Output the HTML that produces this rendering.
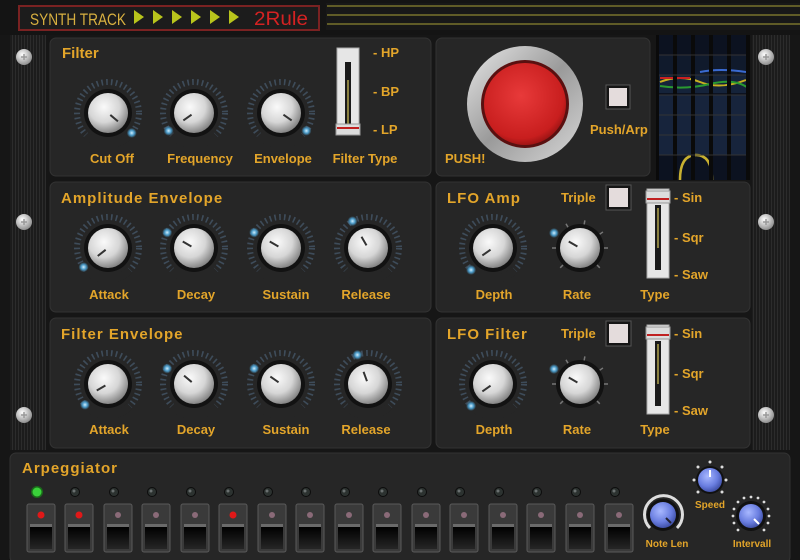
<!DOCTYPE html>
<html><head><meta charset="utf-8"><style>
html,body{margin:0;padding:0;background:#161616;}
svg{display:block}
text{font-family:"Liberation Sans",sans-serif;font-weight:bold;fill:#e3a52a;}
</style></head><body>
<svg width="800" height="560" viewBox="0 0 800 560" xmlns="http://www.w3.org/2000/svg">
<defs>
<radialGradient id="kg" cx="0.4" cy="0.35" r="0.7">
<stop offset="0" stop-color="#fafafa"/><stop offset="0.55" stop-color="#d6d6d6"/><stop offset="1" stop-color="#7a7a7a"/></radialGradient>
<radialGradient id="bg" cx="0.4" cy="0.35" r="0.7">
<stop offset="0" stop-color="#a8b8ff"/><stop offset="0.6" stop-color="#6a7ee0"/><stop offset="1" stop-color="#3a4aa0"/></radialGradient>
<radialGradient id="red" cx="0.45" cy="0.4" r="0.65">
<stop offset="0" stop-color="#e83a3a"/><stop offset="0.8" stop-color="#c81e1e"/><stop offset="1" stop-color="#8a1010"/></radialGradient>
<linearGradient id="ring" x1="0" y1="0" x2="1" y2="1">
<stop offset="0" stop-color="#e8e8e8"/><stop offset="0.5" stop-color="#9a9a9a"/><stop offset="1" stop-color="#d8d8d8"/></linearGradient>
<linearGradient id="key" x1="0" y1="0" x2="0" y2="1">
<stop offset="0" stop-color="#000"/><stop offset="1" stop-color="#262626"/></linearGradient>
<radialGradient id="glow"><stop offset="0" stop-color="#cfefff"/><stop offset="0.5" stop-color="#4a9ac8"/><stop offset="1" stop-color="#4a9ac8" stop-opacity="0"/></radialGradient>
<radialGradient id="screw" cx="0.4" cy="0.35" r="0.7"><stop offset="0" stop-color="#fff"/><stop offset="1" stop-color="#888"/></radialGradient>
<pattern id="stripes" width="3" height="10" patternUnits="userSpaceOnUse"><rect width="3" height="10" fill="#1c1c1c"/><rect width="1" height="10" fill="#2c2c2c"/></pattern>
<g id="ticks">
<circle r="31" fill="none" stroke="#3e4c5a" stroke-width="6" stroke-dasharray="1.6 3.2"/>
<circle r="31" fill="none" stroke="#262626" stroke-width="8" stroke-dasharray="0 24.35 48.7 122"/>
</g>
<g id="body">
<circle r="24" fill="#121212"/>
<circle r="20" fill="url(#kg)"/>
</g>
<g id="step">
<rect x="0" y="0" width="28" height="48" rx="2" fill="#3a3a3a" stroke="#5a5a5a"/>
<rect x="3" y="20" width="22" height="3" fill="#6a6a6a"/>
<rect x="3" y="23" width="22" height="22" fill="url(#key)"/>
</g>
<g id="led"><circle r="5" fill="#0c0c0c"/><circle r="4" fill="#2c3230"/><circle cx="-1" cy="-1" r="1.5" fill="#6a7070"/></g>
<g id="scr"><circle r="8" fill="url(#screw)"/><path d="M-3 0H3M0 -3V3" stroke="#999" stroke-width="1.5"/></g>
</defs>

<rect x="0" y="0" width="800" height="35" fill="#141414"/>
<rect x="19" y="6" width="300" height="24" fill="#1c1c1c" stroke="#7a2222" stroke-width="2"/>
<text x="30" y="25" font-size="17" textLength="96" lengthAdjust="spacingAndGlyphs" style="font-weight:normal;fill:#d8b040">SYNTH TRACK</text>
<g fill="#b8c41c">
<path d="M134 10l10 7-10 7z"/><path d="M153 10l10 7-10 7z"/><path d="M172 10l10 7-10 7z"/><path d="M191 10l10 7-10 7z"/><path d="M210 10l10 7-10 7z"/><path d="M229 10l10 7-10 7z"/>
</g>
<text x="254" y="25" font-size="19" textLength="54" lengthAdjust="spacingAndGlyphs" style="fill:#d42222;font-weight:normal">2Rule</text>
<rect x="326" y="3" width="474" height="27" fill="#181818"/>
<g stroke="#8a8430" stroke-width="1.2"><path d="M327 6H800M327 15H800M327 24H800"/></g>

<rect x="10" y="35" width="36" height="415" fill="url(#stripes)"/>
<rect x="752" y="35" width="38" height="415" fill="url(#stripes)"/>
<use href="#scr" x="24" y="57"/><use href="#scr" x="24" y="222"/><use href="#scr" x="24" y="415"/>
<use href="#scr" x="766" y="57"/><use href="#scr" x="766" y="222"/><use href="#scr" x="766" y="415"/>

<g fill="#262626" stroke="#333" stroke-width="1">
<rect x="50" y="38" width="381" height="138" rx="6"/>
<rect x="436" y="38" width="214" height="138" rx="6"/>
<rect x="50" y="182" width="381" height="130" rx="6"/>
<rect x="436" y="182" width="314" height="130" rx="6"/>
<rect x="50" y="318" width="381" height="130" rx="6"/>
<rect x="436" y="318" width="314" height="130" rx="6"/>
<rect x="10" y="453" width="780" height="110" rx="6"/>
</g>

<rect x="656" y="35" width="94" height="145" fill="#0c1220"/>
<rect x="658" y="55" width="90" height="20" fill="#101a2c"/>
<rect x="658" y="75" width="90" height="18" fill="#15233a"/>
<path d="M660 82q20-8 40 0t46-2" stroke="#c8b020" stroke-width="2" fill="none"/>
<path d="M660 86q25 4 50-2t38 4" stroke="#2a9a30" stroke-width="2" fill="none"/>
<path d="M700 72q20-4 46 0" stroke="#3a6ad0" stroke-width="2" fill="none"/>
<path d="M660 78h30" stroke="#c82020" stroke-width="2"/>
<rect x="658" y="95" width="90" height="60" fill="#17243c"/>
<path d="M680 180q0-25 16-25t16 25" stroke="#c8b030" stroke-width="2.5" fill="none"/>
<g fill="#0a0a0a"><rect x="656" y="35" width="3" height="145"/><rect x="673" y="35" width="4" height="145"/><rect x="691" y="35" width="4" height="145"/><rect x="709" y="35" width="4" height="145"/><rect x="727" y="35" width="4" height="145"/><rect x="746" y="35" width="4" height="145"/></g>
<g stroke="#333" stroke-width="1"><path d="M659 55H746M659 75H746M659 95H746M659 115H746M659 135H746M659 155H746"/></g>

<text x="62" y="58" font-size="15">Filter</text>
<g transform="translate(108,113)"><use href="#ticks"/><use href="#body"/><g transform="rotate(130)"><path d="M0-3V-13" stroke="#333" stroke-width="2"/><circle cy="-31" r="5" fill="url(#glow)"/></g></g>
<g transform="translate(194,113)"><use href="#ticks"/><use href="#body"/><g transform="rotate(-125)"><path d="M0-3V-13" stroke="#333" stroke-width="2"/><circle cy="-31" r="5" fill="url(#glow)"/></g></g>
<g transform="translate(281,113)"><use href="#ticks"/><use href="#body"/><g transform="rotate(125)"><path d="M0-3V-13" stroke="#333" stroke-width="2"/><circle cy="-31" r="5" fill="url(#glow)"/></g></g>
<g font-size="13" text-anchor="middle"><text x="112" y="163">Cut Off</text><text x="200" y="163">Frequency</text><text x="283" y="163">Envelope</text><text x="365" y="163">Filter Type</text></g>
<rect x="337" y="48" width="22" height="87" fill="#e6e6e6" stroke="#aaa"/>
<rect x="345" y="62" width="6" height="64" fill="#1a1a1a"/><rect x="347" y="80" width="2" height="44" fill="#8a8040"/>
<rect x="336" y="124" width="24" height="11" fill="#dcdcdc" stroke="#999"/><rect x="337" y="127" width="22" height="2" fill="#c02020"/>
<g font-size="13"><text x="373" y="57">- HP</text><text x="373" y="96">- BP</text><text x="373" y="134">- LP</text></g>

<circle cx="525" cy="104" r="58" fill="url(#ring)"/>
<circle cx="525" cy="104" r="44" fill="#5a1010"/>
<circle cx="525" cy="104" r="41" fill="url(#red)"/>
<rect x="606" y="85" width="24" height="24" fill="#151515" stroke="#555"/>
<rect x="609" y="88" width="18" height="18" fill="#e4dcdc"/>
<text x="590" y="134" font-size="13">Push/Arp</text>
<text x="445" y="163" font-size="13">PUSH!</text>

<text x="61" y="203" font-size="15" letter-spacing="1">Amplitude Envelope</text>
<g transform="translate(108,248)"><use href="#ticks"/><use href="#body"/><g transform="rotate(-128)"><path d="M0-3V-13" stroke="#333" stroke-width="2"/><circle cy="-31" r="5" fill="url(#glow)"/></g></g>
<g transform="translate(194,248)"><use href="#ticks"/><use href="#body"/><g transform="rotate(-60)"><path d="M0-3V-13" stroke="#333" stroke-width="2"/><circle cy="-31" r="5" fill="url(#glow)"/></g></g>
<g transform="translate(281,248)"><use href="#ticks"/><use href="#body"/><g transform="rotate(-60)"><path d="M0-3V-13" stroke="#333" stroke-width="2"/><circle cy="-31" r="5" fill="url(#glow)"/></g></g>
<g transform="translate(368,248)"><use href="#ticks"/><use href="#body"/><g transform="rotate(-30)"><path d="M0-3V-13" stroke="#333" stroke-width="2"/><circle cy="-31" r="5" fill="url(#glow)"/></g></g>
<g font-size="13" text-anchor="middle"><text x="109" y="299">Attack</text><text x="196" y="299">Decay</text><text x="286" y="299">Sustain</text><text x="366" y="299">Release</text></g>

<text x="61" y="339" font-size="15" letter-spacing="1">Filter Envelope</text>
<g transform="translate(108,384)"><use href="#ticks"/><use href="#body"/><g transform="rotate(-120)"><path d="M0-3V-13" stroke="#333" stroke-width="2"/><circle cy="-31" r="5" fill="url(#glow)" transform="rotate(-12)"/></g></g>
<g transform="translate(194,384)"><use href="#ticks"/><use href="#body"/><g transform="rotate(-50)"><path d="M0-3V-13" stroke="#333" stroke-width="2"/><circle cy="-31" r="5" fill="url(#glow)" transform="rotate(-10)"/></g></g>
<g transform="translate(281,384)"><use href="#ticks"/><use href="#body"/><g transform="rotate(-55)"><path d="M0-3V-13" stroke="#333" stroke-width="2"/><circle cy="-31" r="5" fill="url(#glow)" transform="rotate(-5)"/></g></g>
<g transform="translate(368,384)"><use href="#ticks"/><use href="#body"/><g transform="rotate(-20)"><path d="M0-3V-13" stroke="#333" stroke-width="2"/><circle cy="-31" r="5" fill="url(#glow)"/></g></g>
<g font-size="13" text-anchor="middle"><text x="109" y="434">Attack</text><text x="196" y="434">Decay</text><text x="286" y="434">Sustain</text><text x="366" y="434">Release</text></g>

<text x="447" y="203" font-size="15" letter-spacing="1">LFO Amp</text>
<text x="561" y="202" font-size="13">Triple</text>
<rect x="606" y="185" width="25" height="25" fill="#151515" stroke="#555"/><rect x="609" y="188" width="19" height="19" fill="#e4dcdc"/>
<g transform="translate(493,248)"><use href="#ticks"/><use href="#body"/><g transform="rotate(-125)"><path d="M0-3V-13" stroke="#333" stroke-width="2"/><circle cy="-31" r="5" fill="url(#glow)" transform="rotate(-10)"/></g></g>
<g transform="translate(580,248)"><g stroke="#777" stroke-width="1.5"><path d="M0-28v5" transform="rotate(-135)"/><path d="M0-28v5" transform="rotate(-90)"/><path d="M0-28v5" transform="rotate(-30)"/><path d="M0-28v5" transform="rotate(10)"/><path d="M0-28v5" transform="rotate(55)"/><path d="M0-28v5" transform="rotate(90)"/><path d="M0-28v5" transform="rotate(135)"/></g><use href="#body"/><g transform="rotate(-60)"><path d="M0-3V-13" stroke="#333" stroke-width="2"/><circle cy="-30" r="5" fill="url(#glow)"/></g></g>
<rect x="647" y="189" width="22" height="89" fill="#e6e6e6" stroke="#aaa"/>
<rect x="655" y="205" width="6" height="65" fill="#1a1a1a"/><rect x="657" y="208" width="2" height="40" fill="#8a8040"/>
<rect x="646" y="191" width="24" height="12" fill="#dcdcdc" stroke="#999"/><rect x="647" y="198" width="22" height="2" fill="#c02020"/>
<g font-size="13"><text x="674" y="202">- Sin</text><text x="674" y="242">- Sqr</text><text x="674" y="279">- Saw</text></g>
<g font-size="13" text-anchor="middle"><text x="494" y="299">Depth</text><text x="577" y="299">Rate</text><text x="655" y="299">Type</text></g>

<text x="447" y="339" font-size="15" letter-spacing="1">LFO Filter</text>
<text x="561" y="338" font-size="13">Triple</text>
<rect x="606" y="321" width="25" height="25" fill="#151515" stroke="#555"/><rect x="609" y="324" width="19" height="19" fill="#e4dcdc"/>
<g transform="translate(493,384)"><use href="#ticks"/><use href="#body"/><g transform="rotate(-125)"><path d="M0-3V-13" stroke="#333" stroke-width="2"/><circle cy="-31" r="5" fill="url(#glow)" transform="rotate(-10)"/></g></g>
<g transform="translate(580,384)"><g stroke="#777" stroke-width="1.5"><path d="M0-28v5" transform="rotate(-135)"/><path d="M0-28v5" transform="rotate(-90)"/><path d="M0-28v5" transform="rotate(-30)"/><path d="M0-28v5" transform="rotate(10)"/><path d="M0-28v5" transform="rotate(55)"/><path d="M0-28v5" transform="rotate(90)"/><path d="M0-28v5" transform="rotate(135)"/></g><use href="#body"/><g transform="rotate(-60)"><path d="M0-3V-13" stroke="#333" stroke-width="2"/><circle cy="-30" r="5" fill="url(#glow)"/></g></g>
<rect x="647" y="325" width="22" height="89" fill="#e6e6e6" stroke="#aaa"/>
<rect x="655" y="341" width="6" height="65" fill="#1a1a1a"/><rect x="657" y="344" width="2" height="40" fill="#8a8040"/>
<rect x="646" y="327" width="24" height="12" fill="#dcdcdc" stroke="#999"/><rect x="647" y="334" width="22" height="2" fill="#c02020"/>
<g font-size="13"><text x="674" y="338">- Sin</text><text x="674" y="378">- Sqr</text><text x="674" y="415">- Saw</text></g>
<g font-size="13" text-anchor="middle"><text x="494" y="434">Depth</text><text x="577" y="434">Rate</text><text x="655" y="434">Type</text></g>

<text x="22" y="473" font-size="15" letter-spacing="1">Arpeggiator</text>
<circle cx="37" cy="492" r="6" fill="#1a6a1a"/><circle cx="37" cy="492" r="4.5" fill="#3ad23a"/>
<use href="#led" x="75" y="492"/><use href="#led" x="114" y="492"/><use href="#led" x="152" y="492"/><use href="#led" x="191" y="492"/><use href="#led" x="229" y="492"/><use href="#led" x="268" y="492"/><use href="#led" x="306" y="492"/><use href="#led" x="345" y="492"/><use href="#led" x="383" y="492"/><use href="#led" x="422" y="492"/><use href="#led" x="460" y="492"/><use href="#led" x="499" y="492"/><use href="#led" x="537" y="492"/><use href="#led" x="576" y="492"/><use href="#led" x="615" y="492"/>
<use href="#step" x="27" y="504"/><use href="#step" x="65" y="504"/><use href="#step" x="104" y="504"/><use href="#step" x="142" y="504"/><use href="#step" x="181" y="504"/><use href="#step" x="219" y="504"/><use href="#step" x="258" y="504"/><use href="#step" x="296" y="504"/><use href="#step" x="335" y="504"/><use href="#step" x="373" y="504"/><use href="#step" x="412" y="504"/><use href="#step" x="450" y="504"/><use href="#step" x="489" y="504"/><use href="#step" x="527" y="504"/><use href="#step" x="566" y="504"/><use href="#step" x="605" y="504"/>
<g fill="#8a6a78"><circle cx="118" cy="515" r="3"/><circle cx="156" cy="515" r="3"/><circle cx="195" cy="515" r="3"/><circle cx="272" cy="515" r="3"/><circle cx="310" cy="515" r="3"/><circle cx="349" cy="515" r="3"/><circle cx="387" cy="515" r="3"/><circle cx="426" cy="515" r="3"/><circle cx="464" cy="515" r="3"/><circle cx="503" cy="515" r="3"/><circle cx="541" cy="515" r="3"/><circle cx="580" cy="515" r="3"/><circle cx="619" cy="515" r="3"/></g>
<g fill="#e01818"><circle cx="41" cy="515" r="3.5"/><circle cx="79" cy="515" r="3.5"/><circle cx="233" cy="515" r="3.5"/></g>

<path d="M650 528a19 19 0 1 1 27 0" stroke="#ddd" stroke-width="3" fill="none"/>
<circle cx="663" cy="515" r="16" fill="#111"/><circle cx="663" cy="515" r="13" fill="url(#bg)"/>
<path d="M666 518l5 5" stroke="#223" stroke-width="2"/>
<circle cx="710" cy="480" r="14" fill="#111"/><circle cx="710" cy="480" r="12" fill="url(#bg)"/>
<path d="M710 477v-7" stroke="#fff" stroke-width="2"/>
<g fill="#ddd"><circle cx="710" cy="462" r="1.5"/><circle cx="698" cy="467" r="1.5"/><circle cx="722" cy="467" r="1.5"/><circle cx="694" cy="480" r="1.5"/><circle cx="726" cy="480" r="1.5"/><circle cx="698" cy="492" r="1.5"/><circle cx="722" cy="492" r="1.5"/></g>
<circle cx="751" cy="516" r="15" fill="#111"/><circle cx="751" cy="516" r="12" fill="url(#bg)"/>
<path d="M754 519l5 5" stroke="#fff" stroke-width="2"/>
<g fill="#ddd"><circle cx="751" cy="497" r="1.4"/><circle cx="758" cy="498" r="1.4"/><circle cx="744" cy="498" r="1.4"/><circle cx="764" cy="502" r="1.4"/><circle cx="738" cy="502" r="1.4"/><circle cx="768" cy="509" r="1.4"/><circle cx="734" cy="509" r="1.4"/><circle cx="769" cy="516" r="1.4"/><circle cx="733" cy="516" r="1.4"/><circle cx="768" cy="523" r="1.4"/><circle cx="734" cy="523" r="1.4"/><circle cx="764" cy="530" r="1.4"/><circle cx="738" cy="530" r="1.4"/></g>
<g font-size="10" text-anchor="middle"><text x="710" y="508">Speed</text><text x="667" y="547">Note Len</text><text x="752" y="547">Intervall</text></g>
</svg>
</body></html>
